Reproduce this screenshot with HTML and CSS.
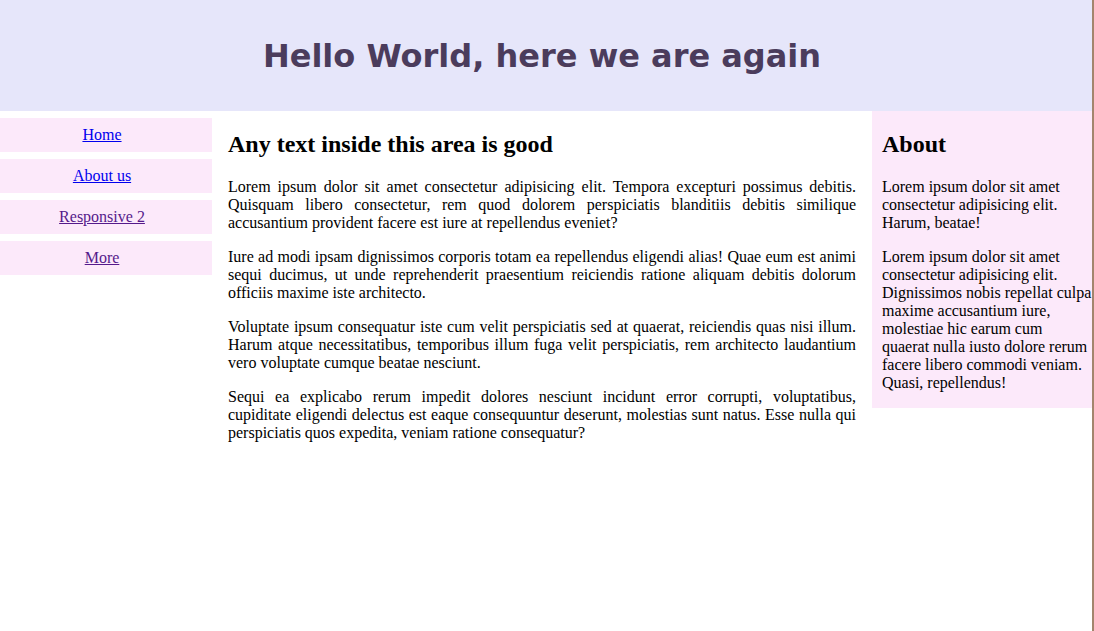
FILE: index.html
```html
<!DOCTYPE html>
<html lang="en">
<head>
<meta charset="utf-8">
<title>Hello World</title>
<link rel="stylesheet" href="styles.css">
</head>
<body>
<div class="page">
  <header class="site-header">
    <h1>Hello World, here we are again</h1>
  </header>
  <nav class="site-nav">
    <a class="nav-item" href="#home">Home</a>
    <a class="nav-item" href="#about">About us</a>
    <a class="nav-item visited" href="#responsive">Responsive 2</a>
    <a class="nav-item visited" href="#more">More</a>
  </nav>
  <main class="content">
    <h2>Any text inside this area is good</h2>
    <p>Lorem ipsum dolor sit amet consectetur adipisicing elit. Tempora excepturi possimus debitis. Quisquam libero consectetur, rem quod dolorem perspiciatis blanditiis debitis similique accusantium provident facere est iure at repellendus eveniet?</p>
    <p>Iure ad modi ipsam dignissimos corporis totam ea repellendus eligendi alias! Quae eum est animi sequi ducimus, ut unde reprehenderit praesentium reiciendis ratione aliquam debitis dolorum officiis maxime iste architecto.</p>
    <p>Voluptate ipsum consequatur iste cum velit perspiciatis sed at quaerat, reiciendis quas nisi illum. Harum atque necessitatibus, temporibus illum fuga velit perspiciatis, rem architecto laudantium vero voluptate cumque beatae nesciunt.</p>
    <p>Sequi ea explicabo rerum impedit dolores nesciunt incidunt error corrupti, voluptatibus, cupiditate eligendi delectus est eaque consequuntur deserunt, molestias sunt natus. Esse nulla qui perspiciatis quos expedita, veniam ratione consequatur?</p>
  </main>
  <aside class="sidebar">
    <h2>About</h2>
    <p>Lorem ipsum dolor sit amet consectetur adipisicing elit. Harum, beatae!</p>
    <p>Lorem ipsum dolor sit amet consectetur adipisicing elit. Dignissimos nobis repellat culpa maxime accusantium iure, molestiae hic earum cum quaerat nulla iusto dolore rerum facere libero commodi veniam. Quasi, repellendus!</p>
  </aside>
</div>
</body>
</html>
```
FILE: styles.css
```css
html, body {
  margin: 0;
  padding: 0;
}

body {
  font-family: "Liberation Serif", "Times New Roman", serif;
  font-size: 16px;
  color: #000;
  background: #fff;
}

.page {
  width: 1092px;
  min-height: 631px;
  border-right: 2px solid #a3856d;
  display: grid;
  grid-template-columns: 212px 660px 220px;
  grid-template-rows: 111px auto;
  align-items: start;
}

.site-header {
  grid-column: 1 / -1;
  height: 111px;
  padding-right: 8px;
  background: #e6e6fa;
  display: flex;
  align-items: center;
  justify-content: center;
}

.site-header h1 {
  margin: 0;
  font-family: "DejaVu Sans", Verdana, sans-serif;
  font-size: 32px;
  font-weight: bold;
  color: #4b3c5c;
}

.site-nav {
  display: flex;
  flex-direction: column;
  gap: 7px;
  padding-top: 7px;
}

.nav-item {
  display: block;
  background: #fce9fa;
  text-align: center;
  padding: 8px 8px 8px 0;
  line-height: 18px;
  color: #0000ee;
}

.nav-item.visited {
  color: #551a8b;
}

.content {
  padding: 0 16px;
  text-align: justify;
}

.content h2,
.sidebar h2 {
  font-size: 24px;
  margin: 20px 0;
}

.content p,
.sidebar p {
  margin: 16px 0;
}

.sidebar {
  background: #fce9fa;
  padding: 0 0 0 10px;
  display: flow-root;
}
```
